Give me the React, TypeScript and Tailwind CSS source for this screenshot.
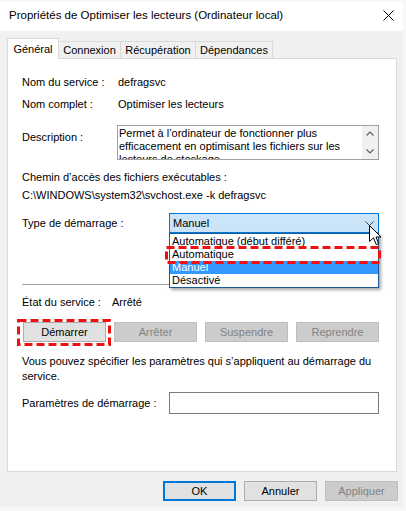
import React from 'react';

const Btn: React.FC<{ label: string; disabled?: boolean; primary?: boolean; className?: string }> = ({
  label,
  disabled,
  primary,
  className = '',
}) => (
  <div
    className={
      'h-[20px] flex items-center justify-center ' +
      (disabled
        ? 'bg-[#cccccc] border border-[#bfbfbf] text-[#838383] '
        : primary
        ? 'bg-[#e1e1e1] border-2 border-[#0078d7] text-black '
        : 'bg-[#e1e1e1] border border-[#adadad] text-black ') +
      className
    }
  >
    {label}
  </div>
);

const DashedBox: React.FC<{ className: string; w: number; h: number }> = ({ className, w, h }) => (
  <svg className={'absolute pointer-events-none ' + className} width={w} height={h}>
    <rect
      x={1.5}
      y={1.5}
      width={w - 3}
      height={h - 3}
      fill="none"
      stroke="#ee1111"
      strokeWidth={3}
      strokeDasharray="8 4"
    />
  </svg>
);

export default function App() {
  const items = ['Automatique (début différé)', 'Automatique', 'Manuel', 'Désactivé'];

  return (
    <div className="w-[406px] h-[511px] bg-[#f7f7f7] overflow-hidden relative font-['Liberation_Sans',Arial,sans-serif] text-[11px] leading-[15px] text-black">
      <div className="w-[403px] h-[505px] mt-[2px] bg-[#f0f0f0] flex flex-col">
        {/* title bar */}
        <div className="h-[29px] bg-white flex items-center justify-between pl-[9px] pr-[9px] pb-[3px]">
          <span className="text-[11.5px]">Propriétés de Optimiser les lecteurs (Ordinateur local)</span>
          <svg width="11" height="11" viewBox="0 0 11 11">
            <path d="M0.5 0.5 L10.5 10.5 M10.5 0.5 L0.5 10.5" stroke="#000" strokeWidth="1" />
          </svg>
        </div>

        {/* tabs */}
        <div className="flex items-end h-[21px] mt-[7px] ml-[7px]">
          <div className="relative z-10 h-[21px] w-[52px] bg-white border border-b-0 border-[#d9d9d9] flex items-start justify-center pt-[3px]">
            Général
          </div>
          <div className="h-[18px] w-[62px] border border-l-0 border-b-0 border-[#d9d9d9] flex items-center justify-center">
            Connexion
          </div>
          <div className="h-[18px] w-[75px] border border-l-0 border-b-0 border-[#d9d9d9] flex items-center justify-center">
            Récupération
          </div>
          <div className="h-[18px] w-[77px] border border-l-0 border-b-0 border-[#d9d9d9] flex items-center justify-center">
            Dépendances
          </div>
        </div>

        {/* panel */}
        <div className="relative w-[390px] h-[414px] ml-[7px] -mt-px bg-white border border-[#d9d9d9] pl-[14px] pr-[17px] pt-[16px]">
          <div className="flex">
            <div className="w-[96px]">Nom du service :</div>
            <div>defragsvc</div>
          </div>
          <div className="flex mt-[7px]">
            <div className="w-[96px]">Nom complet :</div>
            <div>Optimiser les lecteurs</div>
          </div>
          <div className="flex mt-[13px]">
            <div className="w-[95px] mt-[5px]">Description :</div>
            <div className="flex-1 h-[35px] border border-[#a0a0a0] flex overflow-hidden">
              <div className="flex-1 pl-[1px] pt-[1px] leading-[13px] whitespace-nowrap">
                <div>Permet à l’ordinateur de fonctionner plus</div>
                <div>efficacement en optimisant les fichiers sur les</div>
                <div>lecteurs de stockage</div>
              </div>
              <div className="w-[16px] bg-[#f0f0f0] flex flex-col items-center justify-between py-[5px]">
                <svg width="8" height="5" viewBox="0 0 8 5">
                  <path d="M0.5 4.5 L4 1 L7.5 4.5" fill="none" stroke="#606060" strokeWidth="1.2" />
                </svg>
                <svg width="8" height="5" viewBox="0 0 8 5">
                  <path d="M0.5 0.5 L4 4 L7.5 0.5" fill="none" stroke="#606060" strokeWidth="1.2" />
                </svg>
              </div>
            </div>
          </div>

          <div className="mt-[10px]">Chemin d’accès des fichiers exécutables :</div>
          <div className="mt-[3px]">C:\WINDOWS\system32\svchost.exe -k defragsvc</div>

          <div className="flex mt-[10px]">
            <div className="w-[147px] mt-[3px]">Type de démarrage :</div>
            <div className="relative w-[210px]">
              <div className="h-[20px] bg-[#cce4f7] border border-[#0078d7] flex items-center justify-between pl-[3px] pr-[4px]">
                <span>Manuel</span>
                <svg width="9" height="5" viewBox="0 0 9 5">
                  <path d="M0.5 0.5 L4.5 4.5 L8.5 0.5" fill="none" stroke="#444" strokeWidth="1" />
                </svg>
              </div>
              <div className="absolute z-20 left-0 top-full w-[210px] bg-white border border-[#1b5a96] shadow-[2px_2px_3px_rgba(0,0,0,0.35)] pt-px">
                {items.map(it => (
                  <div
                    key={it}
                    className={
                      'h-[13px] leading-[13px] pl-[2px] ' + (it === 'Manuel' ? 'bg-[#3399ff] text-white' : '')
                    }
                  >
                    {it}
                  </div>
                ))}
              </div>
            </div>
          </div>

          <div className="h-px bg-[#a0a0a0] mt-[51px]" />

          <div className="flex mt-[10px]">
            <div className="w-[90px]">État du service :</div>
            <div>Arrêté</div>
          </div>

          <div className="grid grid-cols-4 gap-[8px] mt-[12px] ml-px">
            <Btn label="Démarrer" />
            <Btn label="Arrêter" disabled />
            <Btn label="Suspendre" disabled />
            <Btn label="Reprendre" disabled />
          </div>

          <div className="mt-[12px] whitespace-nowrap">
            <div>Vous pouvez spécifier les paramètres qui s’appliquent au démarrage du</div>
            <div>service.</div>
          </div>

          <div className="flex items-center mt-[8px]">
            <div className="w-[147px]">Paramètres de démarrage :</div>
            <div className="w-[210px] h-[22px] border border-[#7a7a7a]" />
          </div>

          <DashedBox className="left-[157px] top-[187px] z-30" w={216} h={18} />
          <DashedBox className="left-[9px] top-[260px] z-30" w={94} h={27} />

          {/* mouse cursor */}
          <svg className="absolute z-40 left-[361px] top-[166px]" width="13" height="21" viewBox="0 0 13 21">
            <path
              d="M0.5 0.5 L0.5 16.5 L4.5 12.8 L7.2 19.5 L9.6 18.5 L7 12 L12 12 Z"
              fill="#fff"
              stroke="#000"
              strokeWidth="1"
              strokeLinejoin="round"
            />
          </svg>
        </div>

        {/* bottom buttons */}
        <div className="flex justify-end gap-[8px] mt-[9px] pr-[5px]">
          <Btn label="OK" primary className="w-[73px]" />
          <Btn label="Annuler" className="w-[73px]" />
          <Btn label="Appliquer" disabled className="w-[73px]" />
        </div>
      </div>
    </div>
  );
}
